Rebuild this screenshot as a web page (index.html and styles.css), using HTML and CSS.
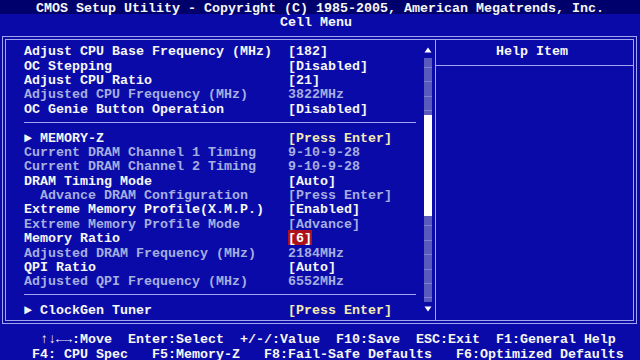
FILE: index.html
```html
<!DOCTYPE html>
<html lang="en">
<head>
  <meta charset="UTF-8">
  <title>CMOS Setup Utility - Cell Menu</title>
  <link rel="stylesheet" href="styles.css">
</head>
<body>
  <div class="title">CMOS Setup Utility - Copyright (C) 1985-2005, American Megatrends, Inc.</div>
  <div class="subtitle">Cell Menu</div>

  <div class="frame">
    <div class="main">
      <div class="list">
        <div class="row"><span class="label">Adjust CPU Base Frequency (MHz)</span><span>[182]</span></div>
        <div class="row"><span class="label">OC Stepping</span><span>[Disabled]</span></div>
        <div class="row"><span class="label">Adjust CPU Ratio</span><span>[21]</span></div>
        <div class="row dim"><span class="label">Adjusted CPU Frequency (MHz)</span><span>3822MHz</span></div>
        <div class="row"><span class="label">OC Genie Button Operation</span><span>[Disabled]</span></div>
        <div class="sep"></div>
        <div class="row"><span class="label">► MEMORY-Z</span><span class="enter">[Press Enter]</span></div>
        <div class="row dim"><span class="label">Current DRAM Channel 1 Timing</span><span>9-10-9-28</span></div>
        <div class="row dim"><span class="label">Current DRAM Channel 2 Timing</span><span>9-10-9-28</span></div>
        <div class="row"><span class="label">DRAM Timing Mode</span><span>[Auto]</span></div>
        <div class="row dim"><span class="label">  Advance DRAM Configuration</span><span>[Press Enter]</span></div>
        <div class="row"><span class="label">Extreme Memory Profile(X.M.P.)</span><span>[Enabled]</span></div>
        <div class="row dim"><span class="label">Extreme Memory Profile Mode</span><span>[Advance]</span></div>
        <div class="row"><span class="label">Memory Ratio</span><span class="selected">[6]</span></div>
        <div class="row dim"><span class="label">Adjusted DRAM Frequency (MHz)</span><span>2184MHz</span></div>
        <div class="row"><span class="label">QPI Ratio</span><span>[Auto]</span></div>
        <div class="row dim"><span class="label">Adjusted QPI Frequency (MHz)</span><span>6552MHz</span></div>
        <div class="sep"></div>
        <div class="row"><span class="label">► ClockGen Tuner</span><span class="enter">[Press Enter]</span></div>
      </div>

      <div class="scroll">
        <div class="arrow">
          <svg width="8" height="14" viewBox="0 0 8 14"><polygon points="4,4.5 7.5,9.5 0.5,9.5" fill="#fff"/></svg>
        </div>
        <div class="track">
          <div class="thumb"></div>
        </div>
        <div class="arrow">
          <svg width="8" height="14" viewBox="0 0 8 14"><polygon points="0.5,4.5 7.5,4.5 4,9.5" fill="#fff"/></svg>
        </div>
      </div>
    </div>

    <div class="help">
      <div class="help-head">Help Item</div>
    </div>
  </div>

  <div class="keys">
    <div class="keys-line first">↑↓←→:Move  Enter:Select  +/-/:Value  F10:Save  ESC:Exit  F1:General Help</div>
    <div class="keys-line">F4: CPU Spec   F5:Memory-Z   F8:Fail-Safe Defaults   F6:Optimized Defaults</div>
  </div>
</body>
</html>
```

FILE: styles.css
```css
body {
  margin: 0;
  width: 640px;
  height: 360px;
  overflow: hidden;
  background: #0a0aa8;
  color: #f6f6f6;
  font-family: "Liberation Mono", "DejaVu Sans Mono", monospace;
  font-weight: bold;
  font-size: 13.333px;
  line-height: 17px; /* taller line box drops the glyphs onto the 14.4px text grid */
}

.title {
  height: 14.4px;
  background: #00006c;
  text-align: center;
  white-space: pre;
}

.subtitle {
  height: 14.4px;
  text-align: center;
  padding-right: 8px;
}

/* main double-line box */
.frame {
  display: flex;
  height: 280px;
  margin: 7.2px 3px 7.2px 2px;
  border: 4px double #a4a4f0;
}

.main {
  display: flex;
  width: 429px;
  border-right: 1px solid #a4a4f0;
}

.list {
  flex: 1;
  padding: 3.2px 8px 0 18px;
}

.row {
  display: flex;
  height: 14.4px;
  white-space: pre;
}

.label {
  width: 264px;
}

.dim {
  color: #a6aee0;
}

.enter {
  color: #f2eab4;
}

.selected {
  height: 14.4px;
  background: #ac121e;
  color: #fff;
}

.sep {
  height: 14.4px;
  display: flex;
  align-items: center;
}

.sep:before {
  content: "";
  flex: 1;
  border-top: 1px solid #a4a4f0;
}

/* scroll bar */
.scroll {
  width: 8px;
  margin-right: 3px;
  padding-top: 3.2px;
}

.arrow {
  height: 14.4px;
}

.arrow svg {
  display: block;
}

.track {
  height: 187.2px;
  padding-top: 57.6px;
  background-color: #5a5abe;
  background-image: repeating-linear-gradient(to bottom, transparent 0, transparent 9px, rgba(170, 170, 235, 0.45) 9px, rgba(170, 170, 235, 0.45) 10px, transparent 10px, transparent 14.4px);
}

.thumb {
  height: 100.8px;
  background: #fff;
}

/* help panel */
.help {
  flex: 1;
}

.help-head {
  height: 14.4px;
  text-align: center;
  padding: 3.2px 5px 7.2px 0;
  border-bottom: 1px solid #a4a4f0;
}

/* key legend */
.keys-line {
  height: 14.4px;
  white-space: pre;
  padding-left: 32px;
}

.keys-line.first {
  padding-left: 40px;
}
```
